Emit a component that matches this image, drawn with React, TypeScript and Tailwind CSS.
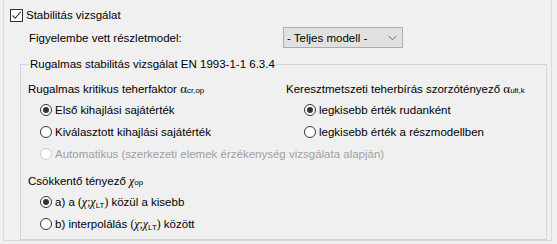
import React from "react";

const font = { fontFamily: '"Liberation Sans", Arial, sans-serif' };

function Radio({ checked = false, disabled = false }: { checked?: boolean; disabled?: boolean }) {
  return (
    <span
      className={`w-[12px] h-[12px] rounded-full border flex items-center justify-center shrink-0 bg-white ${
        disabled ? "border-[#cccccc] bg-[#f0f0f0]" : "border-[#333333]"
      }`}
    >
      {checked && <span className="w-[6px] h-[6px] rounded-full bg-[#333333]" />}
    </span>
  );
}

function Chi() {
  return <span className="font-['Liberation_Serif'] italic text-[12px]">χ</span>;
}

function ChiPair() {
  return (
    <span className="font-['Liberation_Serif']">
      (<Chi />;<Chi />
      <sub className="text-[8px] not-italic font-['Liberation_Sans']">LT</sub>)
    </span>
  );
}

function RadioRow({
  checked,
  disabled,
  indent,
  children,
}: {
  checked?: boolean;
  disabled?: boolean;
  indent: string;
  children: React.ReactNode;
}) {
  return (
    <div className={`h-[22px] flex items-center gap-[3px] whitespace-nowrap ${indent} ${disabled ? "text-[#a0a0a0]" : ""}`}>
      <Radio checked={checked} disabled={disabled} />
      <span>{children}</span>
    </div>
  );
}

export default function App() {
  return (
    <div className="w-[557px] h-[244px] bg-[#f0f0f0] text-black text-[11.5px] leading-[16px]" style={font}>
      <div className="ml-[3px] w-[549px] h-[241px] border-l border-r border-b border-[#dadada] pt-[8px] flex flex-col">
        {/* top checkbox */}
        <div className="h-[14px] flex items-center pl-[6px]">
          <span className="w-[13px] h-[13px] border border-[#333333] bg-white flex items-center justify-center">
            <svg width="11" height="11" viewBox="0 0 11 11">
              <path d="M1.5 5.5 L4.2 8.3 L9.6 1.8" stroke="#333" strokeWidth="1.1" fill="none" />
            </svg>
          </span>
          <span className="ml-[3px]">Stabilitás vizsgálat</span>
        </div>

        {/* model select */}
        <div className="mt-[5px] h-[21px] flex items-center pl-[25px]">
          <span className="w-[254px]">Figyelembe vett részletmodel:</span>
          <div className="w-[120px] h-[21px] border border-[#adadad] bg-[#e1e1e1] flex items-center justify-between pl-[3px] pr-[5px]">
            <span>- Teljes modell -</span>
            <svg width="9" height="6" viewBox="0 0 9 6">
              <path d="M0.5 0.8 L4.5 4.8 L8.5 0.8" stroke="#6a6a6a" strokeWidth="1" fill="none" />
            </svg>
          </div>
        </div>

        {/* group box */}
        <fieldset className="mt-[8px] ml-[16px] mr-[4px] flex-1 border border-[#d5d5d5] px-[7px]">
          <legend className="ml-[1px] px-[1px] leading-[16px]">Rugalmas stabilitás vizsgálat EN 1993-1-1 6.3.4</legend>
          <div className="grid grid-cols-[258px_1fr] pt-[7px]">
            <div className="flex flex-col">
              <div className="h-[20px] flex items-center whitespace-nowrap">
                Rugalmas kritikus teherfaktor&nbsp;
                <span className="font-['Liberation_Serif'] text-[13px]">α</span>
                <sub className="text-[8px]">cr,op</sub>
              </div>
              <RadioRow checked indent="ml-[12px]">Első kihajlási sajátérték</RadioRow>
              <RadioRow indent="ml-[12px]">Kiválasztott kihajlási sajátérték</RadioRow>
              <RadioRow disabled indent="ml-[12px]">
                Automatikus (szerkezeti elemek érzékenység vizsgálata alapján)
              </RadioRow>
              <div className="mt-[6px] h-[20px] flex items-center whitespace-nowrap">
                Csökkentő tényező&nbsp;
                <Chi />
                <sub className="text-[8px]">op</sub>
              </div>
              <RadioRow checked indent="ml-[12px]">
                a) a <ChiPair /> közül a kisebb
              </RadioRow>
              <RadioRow indent="ml-[12px]">
                b) interpolálás <ChiPair /> között
              </RadioRow>
            </div>
            <div className="flex flex-col">
              <div className="h-[20px] flex items-center whitespace-nowrap">
                Keresztmetszeti teherbírás szorzótényező&nbsp;
                <span className="font-['Liberation_Serif'] text-[13px]">α</span>
                <sub className="text-[8px]">ult,k</sub>
              </div>
              <RadioRow checked indent="ml-[18px]">legkisebb érték rudanként</RadioRow>
              <RadioRow indent="ml-[18px]">legkisebb érték a részmodellben</RadioRow>
            </div>
          </div>
        </fieldset>
      </div>
    </div>
  );
}
